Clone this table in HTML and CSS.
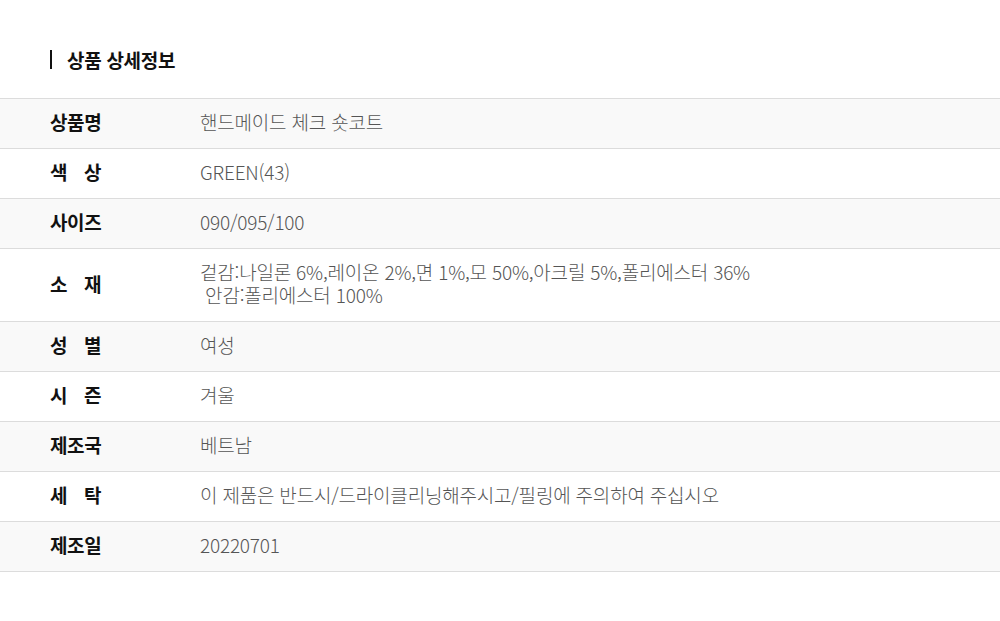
FILE: index.html
```html
<!DOCTYPE html>
<html lang="ko">
<head>
<meta charset="utf-8">
<link rel="stylesheet" href="styles.css">
</head>
<body>
<div class="page">
  <h2 class="title">상품 상세정보</h2>
  <div class="table">
    <div class="row alt"><div class="label">상품명</div><div class="value">핸드메이드 체크 숏코트</div></div>
    <div class="row"><div class="label spread"><span>색</span><span>상</span></div><div class="value">GREEN(43)</div></div>
    <div class="row alt"><div class="label">사이즈</div><div class="value">090/095/100</div></div>
    <div class="row tall"><div class="label spread"><span>소</span><span>재</span></div><div class="value multi"><div class="line">겉감:나일론 6%,레이온 2%,면 1%,모 50%,아크릴 5%,폴리에스터 36%</div><div class="line">&nbsp;안감:폴리에스터 100%</div></div></div>
    <div class="row alt"><div class="label spread"><span>성</span><span>별</span></div><div class="value">여성</div></div>
    <div class="row"><div class="label spread"><span>시</span><span>즌</span></div><div class="value">겨울</div></div>
    <div class="row alt"><div class="label">제조국</div><div class="value">베트남</div></div>
    <div class="row"><div class="label spread"><span>세</span><span>탁</span></div><div class="value">이 제품은 반드시/드라이클리닝해주시고/필링에 주의하여 주십시오</div></div>
    <div class="row alt"><div class="label">제조일</div><div class="value">20220701</div></div>
  </div>
</div>
</body>
</html>
```

FILE: styles.css
```css
html, body {
  margin: 0;
  padding: 0;
  background: #fff;
}
body {
  font-family: "Noto Sans CJK KR", "Noto Sans", sans-serif;
  color: #111;
}
.page {
  padding-top: 50px;
}
.title {
  margin: 0 0 29px 50px;
  padding-left: 15px;
  border-left: 2px solid #111;
  font-size: 19px;
  font-weight: 700;
  line-height: 19px;
  height: 19px;
  letter-spacing: -0.3px;
  display: flex;
  align-items: center;
}
.table {
  border-top: 1px solid #dcdcdc;
}
.row {
  display: flex;
  align-items: center;
  height: 45px;
  padding-bottom: 4px;
  border-bottom: 1px solid #dcdcdc;
  background: #fff;
}
.row.alt {
  background: #f9f9f9;
}
.row.tall {
  height: 68px;
}
.label {
  width: 51px;
  margin-left: 50px;
  margin-right: 99px;
  font-size: 19px;
  font-weight: 700;
  color: #111;
  letter-spacing: -0.4px;
  white-space: nowrap;
}
.label.spread {
  display: flex;
  justify-content: space-between;
}
.value {
  font-size: 19px;
  font-weight: 300;
  color: #555;
  line-height: 23px;
  letter-spacing: -0.2px;
  white-space: nowrap;
}
.value.multi {
  display: flex;
  flex-direction: column;
}
.line {
  height: 23px;
  line-height: 23px;
}
```
